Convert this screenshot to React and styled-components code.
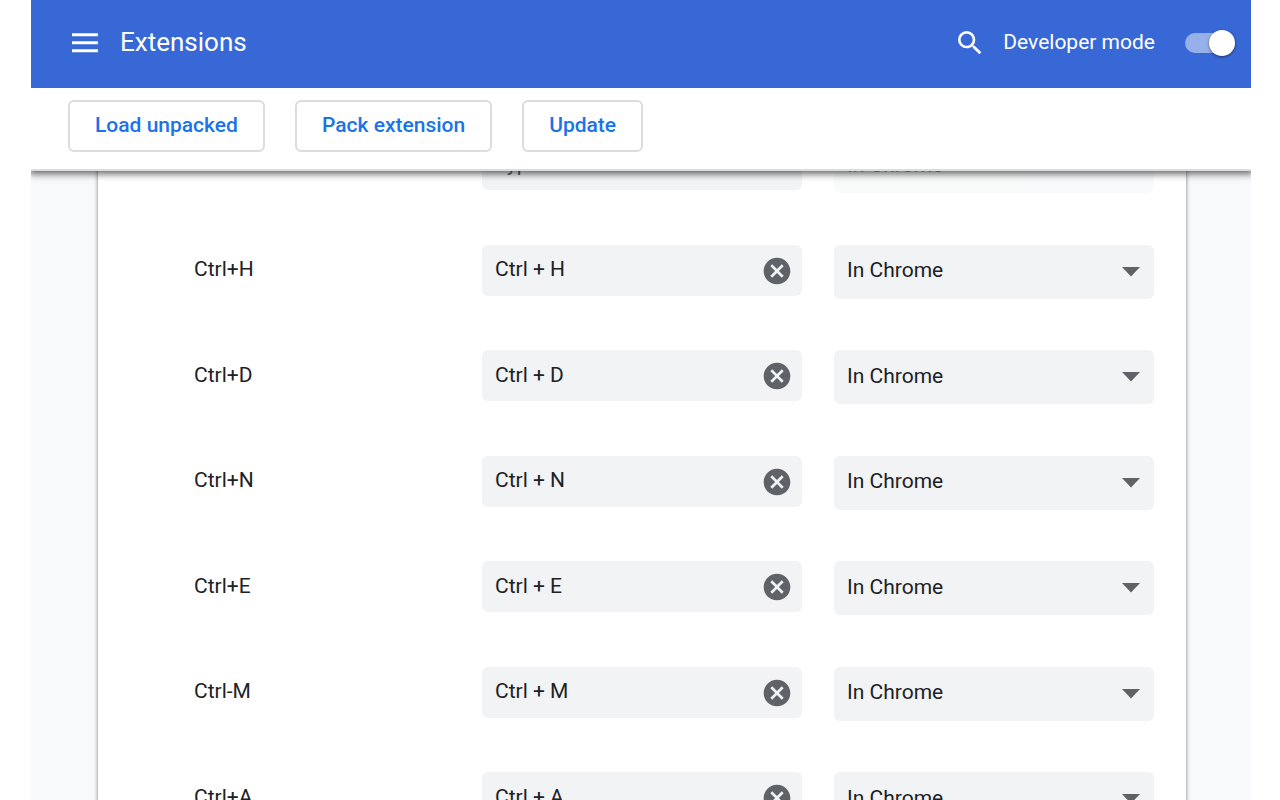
import { useState } from "react";
import styled, { createGlobalStyle } from "styled-components";

const GlobalStyle = createGlobalStyle`
  * {
    box-sizing: border-box;
  }

  body {
    margin: 0;
    background-color: #ffffff;
    color: #202124;
    font-family: Roboto, "Liberation Sans", sans-serif;
    font-size: 21px;
    line-height: 28px;
  }

  button,
  input,
  select {
    font: inherit;
  }
`;

const Page = styled.div`
  display: flex;
  flex-direction: column;
  height: 100vh;
  margin: 0 29px 0 31px;
  background-color: #f8f9fb;
  overflow: hidden;
`;

const Top = styled.div`
  flex: none;
  position: relative;
  z-index: 1;
  border-bottom: 2px solid #dadce0;
  background-color: #ffffff;
  box-shadow: 0 1px 7px 2px rgba(0, 0, 0, 0.6);
`;

const Header = styled.header`
  display: flex;
  align-items: center;
  gap: 17px;
  height: 88px;
  padding: 0 16px 2px 40px;
  background-color: #3768d6;
  color: #ffffff;
`;

const IconButton = styled.button`
  display: flex;
  padding: 0;
  border: none;
  background: none;
  color: inherit;
  cursor: pointer;
`;

const Title = styled.h1`
  flex: 1;
  margin: 0;
  padding-bottom: 2px;
  font-size: 26px;
  font-weight: 400;
  line-height: 32px;
`;

const DevMode = styled.label`
  display: flex;
  align-items: center;
  gap: 30px;
`;

const DevModeText = styled.span`
  padding-bottom: 2px;
`;

const Toggle = styled.input`
  appearance: none;
  display: flex;
  align-items: center;
  width: 50px;
  height: 26px;
  margin: 0;
  cursor: pointer;

  &::before {
    content: "";
    width: 44px;
    height: 20px;
    border-radius: 10px;
    background-color: rgba(255, 255, 255, 0.48);
  }

  &::after {
    content: "";
    width: 26px;
    height: 26px;
    margin-left: ${({ checked }) => (checked ? "-20px" : "-44px")};
    border-radius: 50%;
    background-color: #ffffff;
    box-shadow: 0 1px 3px rgba(0, 0, 0, 0.5);
    flex: none;
  }
`;

const Toolbar = styled.div`
  display: flex;
  gap: 30px;
  padding: 12px 37px 17px;
`;

const ToolbarButton = styled.button`
  height: 52px;
  padding: 0 25px 2px;
  border: 2px solid #dadce0;
  border-radius: 6px;
  background-color: #ffffff;
  color: #1a73e8;
  font-weight: 500;
  cursor: pointer;
`;

const Content = styled.main`
  flex: 1;
  min-height: 0;
  padding: 0 65px 0 67px;
  overflow: hidden;
`;

const Card = styled.section`
  background-color: #ffffff;
  box-shadow: 0 1px 4px rgba(60, 64, 67, 0.7);
`;

const ShortcutList = styled.ul`
  display: grid;
  grid-auto-rows: 1fr;
  min-height: 739px;
  margin: -32px 0 0;
  padding: 0 32px 0 96px;
  list-style: none;
`;

const ShortcutRow = styled.li`
  display: grid;
  grid-template-columns: 1fr 320px 320px;
  align-items: start;
  column-gap: 32px;
`;

const Command = styled.label`
  display: flex;
  align-items: center;
  height: 51px;
  padding-bottom: 2px;
`;

const Field = styled.div`
  display: flex;
  align-items: center;
  height: 51px;
  padding: 1px 9px 0 13px;
  border-radius: 6px;
  background-color: #f1f3f4;
`;

const FieldInput = styled.input`
  flex: 1;
  min-width: 0;
  padding: 0 0 3px;
  border: none;
  outline: none;
  background: none;
  color: #202124;

  &::placeholder {
    color: #5f6368;
  }
`;

const ClearButton = styled(IconButton)`
  color: #5f6368;
`;

const Scope = styled.div`
  position: relative;
  opacity: ${({ $disabled }) => ($disabled ? 0.4 : 1)};

  svg {
    position: absolute;
    top: 22px;
    right: 14px;
    pointer-events: none;
  }
`;

const ScopeSelect = styled.select`
  appearance: none;
  width: 100%;
  height: 54px;
  padding: 0 40px 3px 13px;
  border: none;
  border-radius: 6px;
  background-color: #f1f3f4;
  color: #202124;
  opacity: 1;
`;

const MenuIcon = () => (
  <svg width="32" height="26" viewBox="0 0 32 26" fill="currentColor">
    <path d="M1 3.3h26v3H1zM1 11.3h26v3H1zM1 19.3h26v3H1z" />
  </svg>
);

const SearchIcon = () => (
  <svg width="32" height="32" viewBox="0 0 24 24" fill="currentColor">
    <path d="M15.5 14h-.79l-.28-.27A6.471 6.471 0 0 0 16 9.5 6.5 6.5 0 1 0 9.5 16c1.61 0 3.09-.59 4.23-1.57l.27.28v.79l5 4.99L20.49 19l-4.99-5zm-6 0C7.01 14 5 11.99 5 9.5S7.01 5 9.5 5 14 7.01 14 9.5 11.99 14 9.5 14z" />
  </svg>
);

const CancelIcon = () => (
  <svg width="32" height="32" viewBox="0 0 24 24" fill="currentColor">
    <path d="M12 2C6.47 2 2 6.47 2 12s4.47 10 10 10 10-4.47 10-10S17.53 2 12 2zm5 13.59L15.59 17 12 13.41 8.41 17 7 15.59 10.59 12 7 8.41 8.41 7 12 10.59 15.59 7 17 8.41 13.41 12 17 15.59z" />
  </svg>
);

const ArrowIcon = () => (
  <svg width="18" height="10" viewBox="0 0 18 10" fill="#5f6368">
    <path d="M0 0h18L9 9.5z" />
  </svg>
);

const shortcuts = [
  { id: "unset", name: "", keys: "" },
  { id: "h", name: "Ctrl+H", keys: "Ctrl + H" },
  { id: "d", name: "Ctrl+D", keys: "Ctrl + D" },
  { id: "n", name: "Ctrl+N", keys: "Ctrl + N" },
  { id: "e", name: "Ctrl+E", keys: "Ctrl + E" },
  { id: "m", name: "Ctrl-M", keys: "Ctrl + M" },
  { id: "a", name: "Ctrl+A", keys: "Ctrl + A" },
];

function Shortcut({ id, name, initialKeys }) {
  const [keys, setKeys] = useState(initialKeys);

  return (
    <ShortcutRow>
      <Command htmlFor={`keys-${id}`}>{name}</Command>
      <Field>
        <FieldInput
          id={`keys-${id}`}
          type="text"
          placeholder="Type a shortcut"
          value={keys}
          onChange={(e) => setKeys(e.target.value)}
        />
        {keys && (
          <ClearButton type="button" aria-label="Clear" onClick={() => setKeys("")}>
            <CancelIcon />
          </ClearButton>
        )}
      </Field>
      <Scope $disabled={!keys}>
        <ScopeSelect aria-label="Scope" disabled={!keys}>
          <option>In Chrome</option>
          <option>Global</option>
        </ScopeSelect>
        <ArrowIcon />
      </Scope>
    </ShortcutRow>
  );
}

export default function App() {
  const [devMode, setDevMode] = useState(true);

  return (
    <>
      <GlobalStyle />
      <Page>
        <Top>
          <Header>
            <IconButton type="button" aria-label="Main menu">
              <MenuIcon />
            </IconButton>
            <Title>Extensions</Title>
            <IconButton type="button" aria-label="Search">
              <SearchIcon />
            </IconButton>
            <DevMode>
              <DevModeText>Developer mode</DevModeText>
              <Toggle
                type="checkbox"
                checked={devMode}
                onChange={(e) => setDevMode(e.target.checked)}
              />
            </DevMode>
          </Header>
          {devMode && (
            <Toolbar>
              <ToolbarButton type="button">Load unpacked</ToolbarButton>
              <ToolbarButton type="button">Pack extension</ToolbarButton>
              <ToolbarButton type="button">Update</ToolbarButton>
            </Toolbar>
          )}
        </Top>
        <Content>
          <Card>
            <ShortcutList>
              {shortcuts.map(({ id, name, keys }) => (
                <Shortcut key={id} id={id} name={name} initialKeys={keys} />
              ))}
            </ShortcutList>
          </Card>
        </Content>
      </Page>
    </>
  );
}
